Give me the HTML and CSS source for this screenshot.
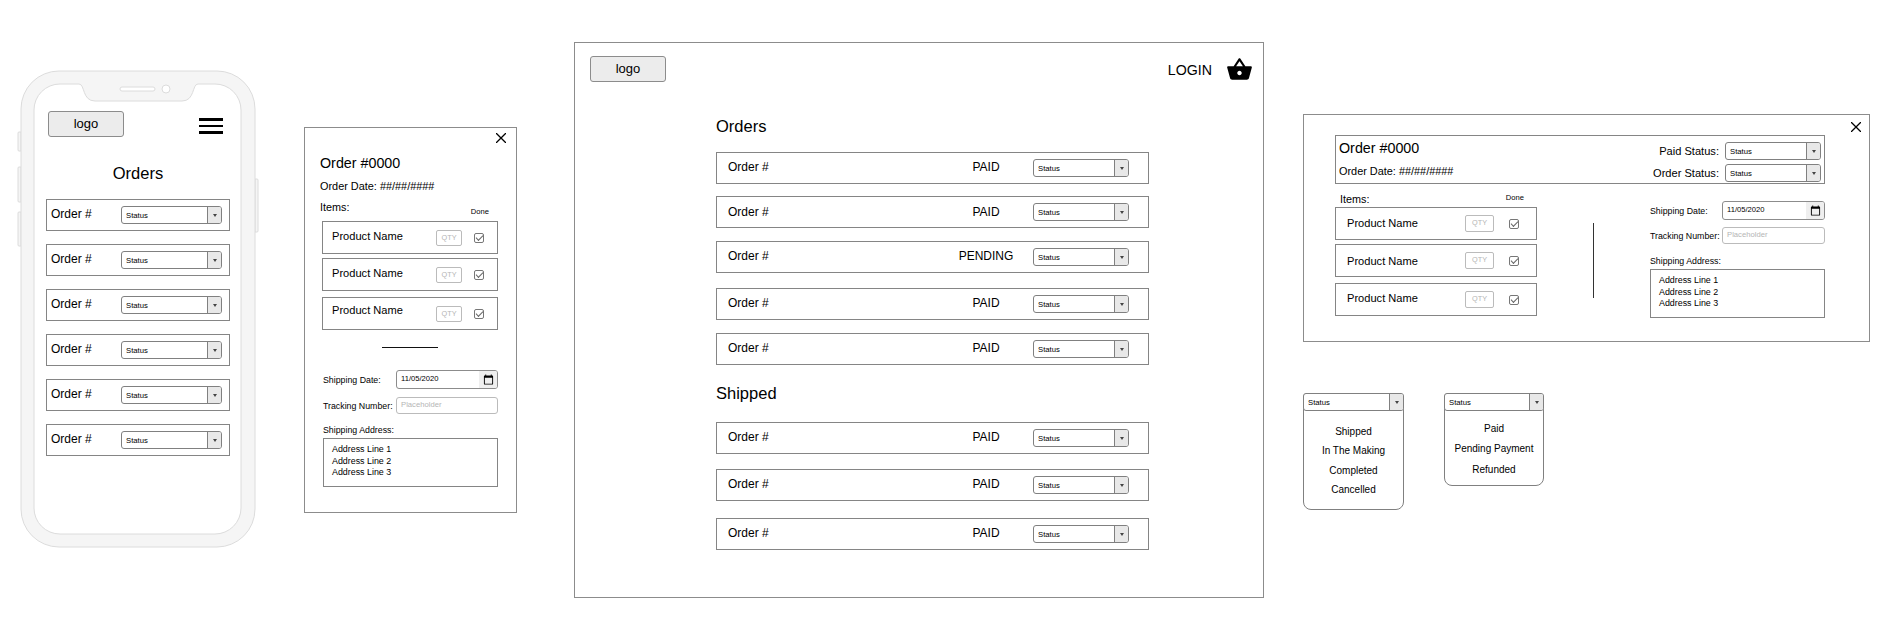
FILE: index.html
```html
<!DOCTYPE html>
<html lang="en">
<head>
<meta charset="UTF-8">
<title>Orders wireframes</title>
<link rel="stylesheet" href="styles.css">
</head>
<body>
<div class="canvas">

  <!-- phone list -->
  <div class="frame phone">
    <svg class="phone-shell" width="244" height="480" viewBox="0 0 244 480">
      <g fill="#f5f5f5" stroke="#dcdcdc" stroke-width="1">
        <path d="M5 62h-2a1 1 0 0 0-1 1v17a1 1 0 0 0 1 1h2z"/>
        <path d="M5 97h-2a1 1 0 0 0-1 1v33a1 1 0 0 0 1 1h2z"/>
        <path d="M5 142h-2a1 1 0 0 0-1 1v32a1 1 0 0 0 1 1h2z"/>
        <path d="M239 109h2a1 1 0 0 1 1 1v51a1 1 0 0 1-1 1h-2z"/>
        <rect x="5" y="1" width="234" height="476" rx="38"/>
      </g>
      <path fill="#fff" stroke="#dcdcdc" d="M44 14h19c6 0 3 17 16 17h87c13 0 10-17 16-17h17a26 26 0 0 1 26 26v398a26 26 0 0 1-26 26H44a26 26 0 0 1-26-26V40a26 26 0 0 1 26-26z"/>
      <rect x="104" y="17" width="35" height="4" rx="2" fill="#fff" stroke="#dcdcdc"/>
      <circle cx="150" cy="19" r="4" fill="#fff" stroke="#dcdcdc"/>
    </svg>
    <div class="phone-body">
      <div class="phone-top">
        <div class="logo">logo</div>
        <div class="burger"><span></span><span></span><span></span></div>
      </div>
      <h2 class="heading heading-center">Orders</h2>
      <div class="phone-list">
        <div class="row phone-row"><span class="order-no">Order #</span><div class="select"><span class="select-text">Status</span><span class="select-btn"></span></div></div>
        <div class="row phone-row"><span class="order-no">Order #</span><div class="select"><span class="select-text">Status</span><span class="select-btn"></span></div></div>
        <div class="row phone-row"><span class="order-no">Order #</span><div class="select"><span class="select-text">Status</span><span class="select-btn"></span></div></div>
        <div class="row phone-row"><span class="order-no">Order #</span><div class="select"><span class="select-text">Status</span><span class="select-btn"></span></div></div>
        <div class="row phone-row"><span class="order-no">Order #</span><div class="select"><span class="select-text">Status</span><span class="select-btn"></span></div></div>
        <div class="row phone-row"><span class="order-no">Order #</span><div class="select"><span class="select-text">Status</span><span class="select-btn"></span></div></div>
      </div>
    </div>
  </div>

  <!-- phone detail -->
  <div class="frame detail">
    <svg class="close" width="10" height="10" viewBox="0 0 10 10"><path d="M0 0l10 10M10 0L0 10"/></svg>
    <div class="order-title">Order #0000</div>
    <div class="order-date">Order Date: ##/##/####</div>
    <div class="items-head"><span class="items-label">Items:</span><span class="done">Done</span></div>
    <div class="items">
      <div class="item"><span class="product">Product Name</span><span class="qty">QTY</span><span class="check"></span></div>
      <div class="item"><span class="product">Product Name</span><span class="qty">QTY</span><span class="check"></span></div>
      <div class="item"><span class="product">Product Name</span><span class="qty">QTY</span><span class="check"></span></div>
    </div>
    <div class="rule"></div>
    <div class="ship-form">
      <div class="form-row">
        <span class="form-label">Shipping Date:</span>
        <div class="date-input"><span class="date-text">11/05/2020</span><span class="date-btn"><svg width="11" height="11" viewBox="0 0 24 24"><path d="M20 3h-1V1h-2v2H7V1H5v2H4c-1.1 0-2 .9-2 2v16c0 1.1.9 2 2 2h16c1.1 0 2-.9 2-2V5c0-1.1-.9-2-2-2zm0 18H4V8h16v13z"/></svg></span></div>
      </div>
      <div class="form-row tracking">
        <span class="form-label">Tracking Number:</span>
        <div class="text-input">Placeholder</div>
      </div>
      <div class="form-label address-label">Shipping Address:</div>
      <div class="address">Address Line 1<br>Address Line 2<br>Address Line 3</div>
    </div>
  </div>

  <!-- desktop list -->
  <div class="frame desk">
    <div class="desk-top">
      <div class="logo">logo</div>
      <span class="login">LOGIN</span>
      <svg class="basket" width="27" height="27" viewBox="0 0 24 24"><path d="M17.21 9l-4.38-6.56c-.19-.28-.51-.42-.83-.42-.32 0-.64.14-.83.43L6.79 9H2c-.55 0-1 .45-1 1 0 .09.01.18.04.27l2.54 9.27c.23.84 1 1.46 1.92 1.46h13c.92 0 1.69-.62 1.93-1.46l2.54-9.27L23 10c0-.55-.45-1-1-1h-4.79zM9 9l3-4.4L15 9H9zm3 8c-1.1 0-2-.9-2-2s.9-2 2-2 2 .9 2 2-.9 2-2 2z"/></svg>
    </div>
    <div class="desk-main">
      <h2 class="heading orders-heading">Orders</h2>
      <div class="desk-list orders-list">
        <div class="row desk-row"><span class="order-no">Order #</span><span class="pay">PAID</span><div class="select"><span class="select-text">Status</span><span class="select-btn"></span></div></div>
        <div class="row desk-row"><span class="order-no">Order #</span><span class="pay">PAID</span><div class="select"><span class="select-text">Status</span><span class="select-btn"></span></div></div>
        <div class="row desk-row"><span class="order-no">Order #</span><span class="pay">PENDING</span><div class="select"><span class="select-text">Status</span><span class="select-btn"></span></div></div>
        <div class="row desk-row"><span class="order-no">Order #</span><span class="pay">PAID</span><div class="select"><span class="select-text">Status</span><span class="select-btn"></span></div></div>
        <div class="row desk-row"><span class="order-no">Order #</span><span class="pay">PAID</span><div class="select"><span class="select-text">Status</span><span class="select-btn"></span></div></div>
      </div>
      <h2 class="heading shipped-heading">Shipped</h2>
      <div class="desk-list shipped-list">
        <div class="row desk-row"><span class="order-no">Order #</span><span class="pay">PAID</span><div class="select"><span class="select-text">Status</span><span class="select-btn"></span></div></div>
        <div class="row desk-row"><span class="order-no">Order #</span><span class="pay">PAID</span><div class="select"><span class="select-text">Status</span><span class="select-btn"></span></div></div>
        <div class="row desk-row"><span class="order-no">Order #</span><span class="pay">PAID</span><div class="select"><span class="select-text">Status</span><span class="select-btn"></span></div></div>
      </div>
    </div>
  </div>

  <!-- desktop detail -->
  <div class="frame wide">
    <svg class="close" width="10" height="10" viewBox="0 0 10 10"><path d="M0 0l10 10M10 0L0 10"/></svg>
    <div class="wide-head">
      <div class="wide-order">
        <div class="order-title">Order #0000</div>
        <div class="order-date">Order Date: ##/##/####</div>
      </div>
      <div class="wide-status">
        <div class="status-line"><span class="status-label">Paid Status:</span><div class="select"><span class="select-text">Status</span><span class="select-btn"></span></div></div>
        <div class="status-line"><span class="status-label">Order Status:</span><div class="select"><span class="select-text">Status</span><span class="select-btn"></span></div></div>
      </div>
    </div>
    <div class="wide-body">
      <div class="wide-items">
        <div class="items-head"><span class="items-label">Items:</span><span class="done">Done</span></div>
        <div class="items">
          <div class="item"><span class="product">Product Name</span><span class="qty">QTY</span><span class="check"></span></div>
          <div class="item"><span class="product">Product Name</span><span class="qty">QTY</span><span class="check"></span></div>
          <div class="item"><span class="product">Product Name</span><span class="qty">QTY</span><span class="check"></span></div>
        </div>
      </div>
      <div class="vrule"></div>
      <div class="ship-form">
        <div class="form-row">
          <span class="form-label">Shipping Date:</span>
          <div class="date-input"><span class="date-text">11/05/2020</span><span class="date-btn"><svg width="11" height="11" viewBox="0 0 24 24"><path d="M20 3h-1V1h-2v2H7V1H5v2H4c-1.1 0-2 .9-2 2v16c0 1.1.9 2 2 2h16c1.1 0 2-.9 2-2V5c0-1.1-.9-2-2-2zm0 18H4V8h16v13z"/></svg></span></div>
        </div>
        <div class="form-row tracking">
          <span class="form-label">Tracking Number:</span>
          <div class="text-input">Placeholder</div>
        </div>
        <div class="form-label address-label">Shipping Address:</div>
        <div class="address">Address Line 1<br>Address Line 2<br>Address Line 3</div>
      </div>
    </div>
  </div>

  <!-- open dropdowns -->
  <div class="frame menu menu-order">
    <div class="select"><span class="select-text">Status</span><span class="select-btn"></span></div>
    <div class="menu-items">
      <div>Shipped</div>
      <div>In The Making</div>
      <div>Completed</div>
      <div>Cancelled</div>
    </div>
  </div>
  <div class="frame menu menu-paid">
    <div class="select"><span class="select-text">Status</span><span class="select-btn"></span></div>
    <div class="menu-items">
      <div>Paid</div>
      <div>Pending Payment</div>
      <div>Refunded</div>
    </div>
  </div>

</div>
</body>
</html>
```

FILE: styles.css
```css
* {
  box-sizing: border-box;
}
body {
  margin: 0;
  background-color: #fff;
  color: #000;
  font-family: 'Liberation Sans', Arial, sans-serif;
}
.canvas {
  position: relative;
  width: 1886px;
  height: 628px;
  overflow: hidden;
}

/* wireframes sit freely on the canvas */
.frame {
  position: absolute;
  border: 1px solid #8c8c8c;
  background-color: #fff;
}
.phone {
  left: 21px;
  top: 71px;
  width: 234px;
  height: 476px;
  border: none;
  background: none;
}
.detail {
  left: 304px;
  top: 127px;
  width: 213px;
  height: 386px;
  padding: 27px 18px 0 15px;
}
.desk {
  left: 574px;
  top: 42px;
  width: 690px;
  height: 556px;
  padding: 13px 10px 0 15px;
}
.wide {
  left: 1303px;
  top: 114px;
  width: 567px;
  height: 228px;
  padding: 20px 44px 0 31px;
}
.menu {
  top: 393px;
  border-color: #808080;
  border-radius: 4px 4px 8px 8px;
  font-size: 10px;
  text-align: center;
}
.menu-order {
  left: 1303px;
  width: 101px;
  height: 117px;
}
.menu-paid {
  left: 1444px;
  width: 100px;
  height: 93px;
}

/* shared bits */
.logo {
  width: 76px;
  height: 26px;
  line-height: 24px;
  text-align: center;
  font-size: 13px;
  background-color: #ececec;
  border: 1px solid #8c8c8c;
  border-radius: 3px;
}
.heading {
  margin: 0;
  font-size: 16.5px;
  font-weight: normal;
  line-height: 20px;
}
.heading-center {
  margin: 26px 0 16px;
  text-align: center;
}
.row {
  display: flex;
  align-items: center;
  height: 32px;
  border: 1px solid #858585;
  font-size: 12px;
}
.order-no {
  padding-bottom: 2px;
}
.select {
  display: flex;
  width: 96px;
  height: 18px;
  border: 1px solid #808080;
  border-radius: 3px;
  overflow: hidden;
  background-color: #fff;
  font-size: 7.7px;
  text-align: left;
}
.select-text {
  flex: 1;
  padding-left: 4px;
  line-height: 17px;
}
.select-btn {
  display: flex;
  align-items: center;
  justify-content: center;
  width: 14px;
  background-color: #e8e8e8;
  border-left: 1px solid #808080;
}
.select-btn::after {
  content: "";
  border-top: 3px solid #444;
  border-left: 2.5px solid transparent;
  border-right: 2.5px solid transparent;
}
.close {
  position: absolute;
  top: 5px;
  right: 10px;
}
.wide .close {
  top: 7px;
  right: 8px;
}
.close path {
  fill: none;
  stroke: #000;
  stroke-width: 1.3;
}

/* phone */
.phone-shell {
  position: absolute;
  left: -5px;
  top: -1px;
}
.phone-body {
  position: relative;
  padding: 40px 25px 0;
}
.phone-top {
  display: flex;
  justify-content: space-between;
  padding: 0 7px 0 2px;
}
.burger {
  display: flex;
  flex-direction: column;
  gap: 4px;
  width: 24px;
  margin-top: 7px;
}
.burger span {
  height: 2.5px;
  background-color: #000;
}
.phone-list {
  display: flex;
  flex-direction: column;
  gap: 13px;
}
.phone-row {
  padding-left: 4px;
}
.phone-row .select {
  width: 101px;
  margin: 0 7px 0 auto;
}

/* order detail */
.order-title {
  font-size: 14.3px;
  line-height: 16px;
}
.order-date {
  margin-top: 9px;
  font-size: 10.9px;
  line-height: 12px;
}
.items-head {
  display: flex;
  justify-content: space-between;
  height: 20px;
  margin-top: 9px;
  padding-right: 9px;
}
.items-label {
  font-size: 10.8px;
  line-height: 12px;
}
.done {
  margin-top: 6px;
  font-size: 7.6px;
  line-height: 10px;
}
.items {
  display: flex;
  flex-direction: column;
  margin-left: 2px;
}
.item {
  display: flex;
  align-items: center;
  height: 33px;
  padding: 0 13px 0 9px;
  border: 1px solid #858585;
  font-size: 11.1px;
}
.item:nth-child(2) {
  margin-top: 4px;
}
.item:nth-child(3) {
  margin-top: 6px;
}
.product {
  flex: 1;
  padding-bottom: 4px;
}
.item:nth-child(3) .product {
  padding-bottom: 7px;
}
.qty {
  width: 26px;
  height: 16px;
  border: 1px solid #bbb;
  border-radius: 2px;
  color: #b5b5b5;
  font-size: 7.3px;
  line-height: 14px;
  text-align: center;
}
.check {
  display: flex;
  align-items: center;
  justify-content: center;
  width: 10px;
  height: 10px;
  margin-left: 12px;
  border: 1px solid #777;
  border-radius: 2px;
}
.check::after {
  content: "";
  width: 6px;
  height: 3px;
  margin-top: -1px;
  border-left: 1px solid #666;
  border-bottom: 1px solid #666;
  transform: rotate(-45deg);
}
.rule {
  width: 56px;
  height: 1px;
  margin: 17px 0 0 62px;
  background-color: #111;
}
.ship-form {
  margin: 22px 0 0 3px;
}
.form-row {
  display: flex;
  align-items: center;
}
.form-label {
  width: 73px;
  flex-shrink: 0;
  font-size: 8.8px;
  white-space: nowrap;
}
.date-input {
  display: flex;
  flex: 1;
  height: 19px;
  border: 1px solid #8c8c8c;
  border-radius: 3px;
  overflow: hidden;
}
.date-text {
  flex: 1;
  padding-left: 4px;
  font-size: 7.6px;
  line-height: 15px;
}
.date-btn {
  display: flex;
  align-items: center;
  justify-content: center;
  width: 18px;
  background-color: #efefef;
}
.text-input {
  flex: 1;
  height: 17px;
  padding-left: 4px;
  border: 1px solid #bbb;
  border-radius: 3px;
  color: #b5b5b5;
  font-size: 7.7px;
  line-height: 13px;
}
.tracking {
  margin-top: 8px;
}
.address-label {
  margin-top: 11px;
  line-height: 11px;
}
.address {
  height: 49px;
  margin-top: 2px;
  padding: 5px 0 0 8px;
  border: 1px solid #858585;
  font-size: 8.9px;
  line-height: 11.5px;
}

/* desktop */
.desk-top {
  display: flex;
  align-items: flex-start;
}
.login {
  margin: 6px 14px 0 auto;
  font-size: 14.2px;
  line-height: 17px;
}
.desk-main {
  width: 433px;
  margin-left: 126px;
}
.orders-heading {
  margin-top: 33px;
}
.desk-list {
  margin-top: 16px;
}
.shipped-heading {
  margin-top: 18px;
}
.shipped-list {
  margin-top: 19px;
}
.desk-row {
  padding-left: 11px;
}
.desk-row .order-no {
  width: 220px;
}
.pay {
  width: 76px;
  padding-bottom: 2px;
  text-align: center;
}
.desk-row .select {
  margin-left: 9px;
}
.orders-list .row:nth-child(2) {
  margin-top: 12px;
}
.orders-list .row:nth-child(2) .order-no,
.orders-list .row:nth-child(2) .pay {
  padding-bottom: 0;
}
.orders-list .row:nth-child(3) {
  margin-top: 13px;
}
.orders-list .row:nth-child(4) {
  margin-top: 15px;
}
.orders-list .row:nth-child(5) {
  margin-top: 13px;
}
.shipped-list .row:nth-child(2) {
  margin-top: 15px;
}
.shipped-list .row:nth-child(3) {
  margin-top: 17px;
}

/* wide detail */
.wide-head {
  display: flex;
  justify-content: space-between;
  height: 49px;
  padding: 6px 3px 0 3px;
  border: 1px solid #858585;
}
.wide-order {
  margin-top: -2px;
}
.wide-status {
  display: flex;
  flex-direction: column;
  gap: 4px;
}
.status-line {
  display: flex;
  align-items: center;
  justify-content: flex-end;
  gap: 6px;
}
.status-label {
  font-size: 11.1px;
}
.wide-body {
  display: flex;
  align-items: flex-start;
}
.wide-items {
  width: 202px;
  padding-top: 9px;
}
.wide-items .items-head {
  height: 14px;
  margin-top: 0;
  padding: 0 13px 0 5px;
}
.wide-items .done {
  margin-top: 0;
}
.wide-items .items {
  margin-left: 0;
}
.wide-items .item {
  padding: 0 17px 0 11px;
}
.wide-items .product {
  padding-bottom: 2px;
}
.wide-items .item:nth-child(2) .product {
  padding-bottom: 0;
}
.wide-items .item:nth-child(3) .product {
  padding-bottom: 3px;
}
.wide-items .qty {
  width: 29px;
  height: 17px;
  line-height: 13px;
}
.wide-items .check {
  margin-left: 15px;
}
.vrule {
  width: 1px;
  height: 75px;
  margin: 39px 0 0 56px;
  background-color: #333;
}
.wide-body .ship-form {
  flex: 1;
  margin: 17px 0 0 56px;
}
.wide-body .tracking {
  margin-top: 7px;
}
.wide-body .form-label {
  width: 72px;
}
.wide-body .address-label {
  margin-top: 12px;
}

/* dropdown lists */
.menu .select {
  width: auto;
  margin: -1px -1px 0;
}
.menu-order .menu-items {
  padding-top: 11px;
  line-height: 19.3px;
}
.menu-paid .menu-items {
  padding-top: 8px;
  line-height: 20.3px;
}
```
